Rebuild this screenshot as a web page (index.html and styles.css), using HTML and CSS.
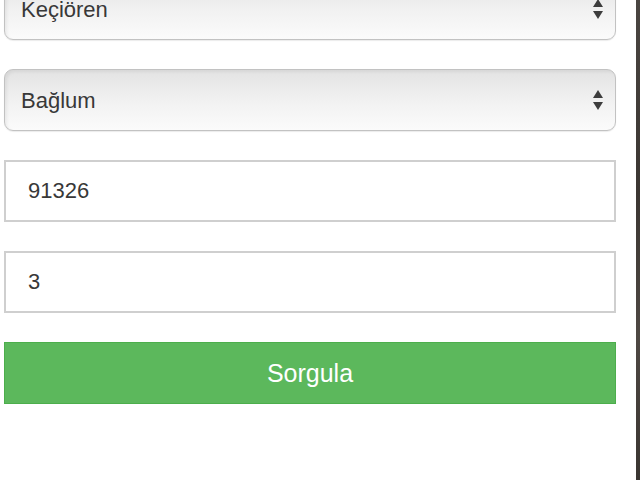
FILE: index.html
```html
<!DOCTYPE html>
<html lang="tr">
<head>
<meta charset="utf-8">
<title>Sorgula</title>
<link rel="stylesheet" href="styles.css">
</head>
<body>
<div class="page">
  <form class="form">
    <div class="select-wrap">
      <select class="select"><option>Keçiören</option></select>
      <svg class="arrows" width="10" height="20" viewBox="0 0 10 20"><path d="M5 0 L10 8 L0 8 Z M0 12 L10 12 L5 20 Z" fill="#3d3d3d"/></svg>
    </div>
    <div class="select-wrap">
      <select class="select"><option>Bağlum</option></select>
      <svg class="arrows" width="10" height="20" viewBox="0 0 10 20"><path d="M5 0 L10 8 L0 8 Z M0 12 L10 12 L5 20 Z" fill="#3d3d3d"/></svg>
    </div>
    <input class="input" type="text" value="91326">
    <input class="input" type="text" value="3">
    <button class="btn" type="button">Sorgula</button>
  </form>
  <div class="edge"></div>
</div>
</body>
</html>
```
FILE: styles.css
```css
* { box-sizing: border-box; }
html, body { margin: 0; padding: 0; background: #fff; overflow: hidden; }
body { font-family: "Liberation Sans", Arial, sans-serif; color: #333; }
.page { display: flex; width: 640px; height: 480px; }
.form {
  flex: 1;
  display: flex;
  flex-direction: column;
  gap: 29px;
  margin-top: -22px;
  padding: 0 20px 0 4px;
}
.select-wrap { position: relative; height: 62px; }
.select {
  appearance: none;
  -webkit-appearance: none;
  width: 100%;
  height: 100%;
  border: 1.5px solid #c2c2c2;
  border-radius: 9px;
  background: linear-gradient(to bottom, #e3e3e3 0%, #f2f2f2 55%, #fbfbfb 100%);
  box-shadow: inset 2px 2px 3px rgba(0,0,0,0.06), 0 1px 1px rgba(0,0,0,0.08);
  font-family: "Liberation Sans", Arial, sans-serif;
  font-size: 22px;
  color: #383838;
  padding: 0 40px 0 16px;
  outline: none;
}
.arrows { position: absolute; right: 13px; top: 21px; }
.input {
  height: 62px;
  width: 100%;
  border: 2px solid #cfcfcf;
  border-radius: 0;
  background: #fff;
  font-family: "Liberation Sans", Arial, sans-serif;
  font-size: 22px;
  color: #383838;
  padding: 0 22px;
  outline: none;
}
.btn {
  height: 62px;
  width: 100%;
  border: 1.5px solid #4cae4c;
  background: #5cb85c;
  color: #fff;
  font-family: "Liberation Sans", Arial, sans-serif;
  font-size: 25px;
  padding: 0;
  border-radius: 0;
}
.edge {
  width: 4px;
  background: linear-gradient(to bottom, #4a4541, #3b3632 40%, #4e4843 70%, #3a3531);
}
```
